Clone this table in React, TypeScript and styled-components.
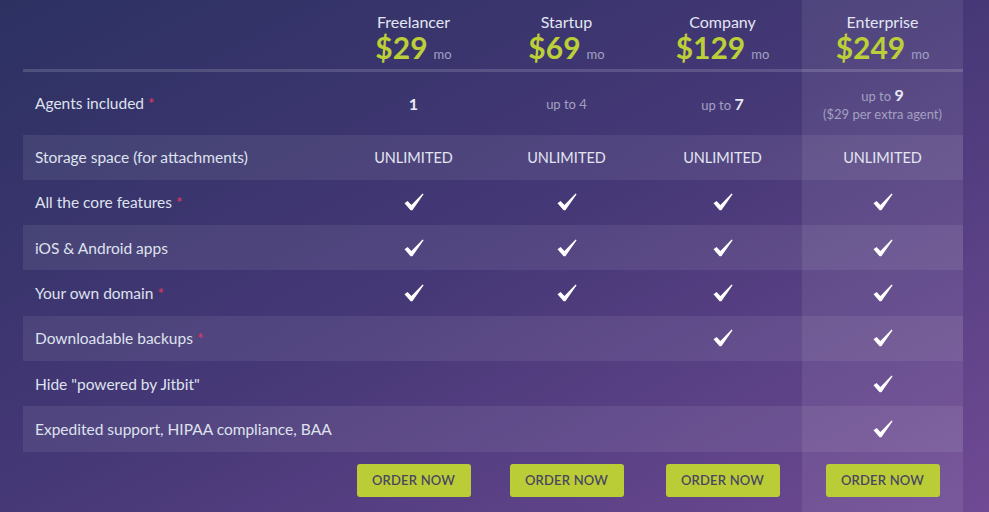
import * as React from 'react';
import styled, { createGlobalStyle } from 'styled-components';

const GlobalStyle = createGlobalStyle`
  html, body {
    margin: 0;
    padding: 0;
    min-height: 100%;
  }
  body {
    background: linear-gradient(to bottom right, #2c3162 0%, #463877 50%, #704a94 100%);
    background-attachment: fixed;
    min-height: 100vh;
    font-family: Lato, "Open Sans", sans-serif;
    color: #dfe2ee;
  }
`;

const Page = styled.div`
  padding: 0 26px 0 23px;
`;

const Table = styled.table`
  width: 940px;
  border-collapse: collapse;
  table-layout: fixed;
`;

const Col = styled.col<{ $w: number }>`
  width: ${p => p.$w}px;
`;

const HeadCell = styled.th<{ $hl?: boolean }>`
  padding: 12px 0 7px;
  font-weight: normal;
  text-align: center;
  border-bottom: 3px solid rgba(255, 255, 255, 0.08);
  background: ${p => (p.$hl ? 'rgba(255,255,255,0.08)' : 'transparent')};
`;

const PlanName = styled.div`
  font-size: 16px;
  line-height: 20px;
  color: #e3e6f2;
`;

const Price = styled.div`
  height: 30px;
  line-height: 30px;
  white-space: nowrap;
`;

const Amount = styled.span`
  font-size: 30px;
  line-height: 30px;
  font-weight: bold;
  color: #bccf38;
`;

const Per = styled.span`
  font-size: 13px;
  line-height: 13px;
  color: #a3a0c2;
  margin-left: 6px;
`;

const Row = styled.tr<{ $light?: boolean; $tall?: boolean }>`
  height: ${p => (p.$tall ? 64 : 45.3)}px;
  background: ${p => (p.$light ? 'rgba(255,255,255,0.075)' : 'transparent')};
`;

const Label = styled.td`
  padding: 0 12px;
  font-size: 15.5px;
  color: #dfe2ee;
  white-space: nowrap;
`;

const Star = styled.span`
  color: #e5365e;
  margin-left: 4px;
`;

const Cell = styled.td<{ $hl?: boolean }>`
  text-align: center;
  vertical-align: middle;
  font-size: 14.5px;
  color: #e3e6f2;
  background: ${p => (p.$hl ? 'rgba(255,255,255,0.08)' : 'transparent')};
`;

const Muted = styled.span`
  font-size: 13px;
  color: #a3a0c2;
`;

const Strong = styled.span`
  font-size: 16px;
  font-weight: bold;
  color: #e8eaf5;
`;

const Note = styled.div`
  font-size: 13px;
  color: #a3a0c2;
  margin-top: 2px;
`;

const CheckIcon = styled.svg`
  display: block;
  margin: 0 auto;
  width: 20px;
  height: 18px;
`;

const ButtonCell = styled.td<{ $hl?: boolean }>`
  text-align: center;
  padding: 12px 0 40px;
  background: ${p => (p.$hl ? 'rgba(255,255,255,0.08)' : 'transparent')};
`;

const OrderButton = styled.button`
  width: 114px;
  height: 33px;
  border: none;
  border-radius: 3px;
  background: #bacd37;
  color: #4b4760;
  font-family: Lato, "Open Sans", sans-serif;
  font-size: 13px;
  font-weight: 600;
  letter-spacing: 0.2px;
  cursor: pointer;
`;

const Check = () => (
  <CheckIcon viewBox="0 0 20 18">
    <path d="M0.5 10.2 L3.6 8 L7.4 12 L18.6 0.4 L19.6 1.3 L8.4 17.2 L6.6 17.2 Z" fill="#ffffff" />
  </CheckIcon>
);

const plans = [
  { name: 'Freelancer', price: '$29' },
  { name: 'Startup', price: '$69' },
  { name: 'Company', price: '$129' },
  { name: 'Enterprise', price: '$249' },
];

const features: { label: string; star?: boolean; has: number }[] = [
  { label: 'All the core features', star: true, has: 0 },
  { label: 'iOS & Android apps', has: 0 },
  { label: 'Your own domain', star: true, has: 0 },
  { label: 'Downloadable backups', star: true, has: 2 },
  { label: 'Hide "powered by Jitbit"', has: 3 },
  { label: 'Expedited support, HIPAA compliance, BAA', has: 3 },
];

export default function App() {
  return (
    <>
      <GlobalStyle />
      <Page>
        <Table>
          <colgroup>
            <Col $w={314} />
            <Col $w={153} />
            <Col $w={153} />
            <Col $w={159} />
            <Col $w={161} />
          </colgroup>
          <thead>
            <tr>
              <HeadCell />
              {plans.map((p, i) => (
                <HeadCell key={p.name} $hl={i === 3}>
                  <PlanName>{p.name}</PlanName>
                  <Price>
                    <Amount>{p.price}</Amount>
                    <Per>mo</Per>
                  </Price>
                </HeadCell>
              ))}
            </tr>
          </thead>
          <tbody>
            <Row $tall>
              <Label>
                Agents included<Star>*</Star>
              </Label>
              <Cell>
                <Strong>1</Strong>
              </Cell>
              <Cell>
                <Muted>up to 4</Muted>
              </Cell>
              <Cell>
                <Muted>up to </Muted>
                <Strong>7</Strong>
              </Cell>
              <Cell $hl>
                <Muted>up to </Muted>
                <Strong>9</Strong>
                <Note>($29 per extra agent)</Note>
              </Cell>
            </Row>
            <Row $light>
              <Label>Storage space (for attachments)</Label>
              {plans.map((p, i) => (
                <Cell key={p.name} $hl={i === 3}>
                  UNLIMITED
                </Cell>
              ))}
            </Row>
            {features.map((f, r) => (
              <Row key={f.label} $light={r % 2 === 1}>
                <Label>
                  {f.label}
                  {f.star && <Star>*</Star>}
                </Label>
                {plans.map((p, i) => (
                  <Cell key={p.name} $hl={i === 3}>
                    {i >= f.has && <Check />}
                  </Cell>
                ))}
              </Row>
            ))}
            <tr>
              <td />
              {plans.map((p, i) => (
                <ButtonCell key={p.name} $hl={i === 3}>
                  <OrderButton>ORDER NOW</OrderButton>
                </ButtonCell>
              ))}
            </tr>
          </tbody>
        </Table>
      </Page>
    </>
  );
}
